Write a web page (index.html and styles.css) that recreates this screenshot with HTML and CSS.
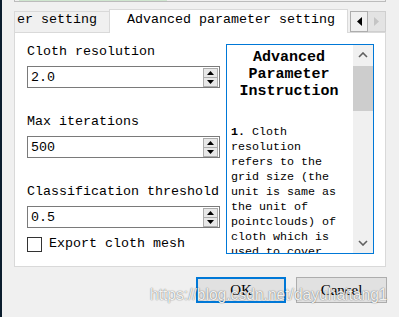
FILE: index.html
```html
<!DOCTYPE html>
<html lang="en">
<head>
    <meta charset="UTF-8">
    <title>CSF parameters</title>
    <link rel="stylesheet" href="styles.css">
</head>
<body>

    <div class="dialog">
        <div class="topstrip"><div class="topfill"></div></div>

        <div class="tabbar">
            <div class="tab">er setting</div>
            <div class="tab active">Advanced parameter setting</div>
            <div class="tabscroll">
                <div class="scrollbtn">
                    <svg width="5" height="9" viewBox="0 0 5 9"><polygon points="5,0 0,4.5 5,9" fill="#000"/></svg>
                </div>
                <div class="scrollbtn disabled">
                    <svg width="5" height="9" viewBox="0 0 5 9"><polygon points="0,0 5,4.5 0,9" fill="#c4c4c4"/></svg>
                </div>
            </div>
        </div>

        <div class="pane">
            <div class="form">
                <div class="label">Cloth resolution</div>
                <div class="spinbox">
                    <span class="value">2.0</span>
                    <div class="spin">
                        <div class="half"><svg width="7" height="4" viewBox="0 0 7 4"><polygon points="0,4 3.5,0 7,4" fill="#000"/></svg></div>
                        <div class="half"><svg width="7" height="4" viewBox="0 0 7 4"><polygon points="0,0 3.5,4 7,0" fill="#000"/></svg></div>
                    </div>
                </div>

                <div class="label">Max iterations</div>
                <div class="spinbox">
                    <span class="value">500</span>
                    <div class="spin">
                        <div class="half"><svg width="7" height="4" viewBox="0 0 7 4"><polygon points="0,4 3.5,0 7,4" fill="#000"/></svg></div>
                        <div class="half"><svg width="7" height="4" viewBox="0 0 7 4"><polygon points="0,0 3.5,4 7,0" fill="#000"/></svg></div>
                    </div>
                </div>

                <div class="label">Classification threshold</div>
                <div class="spinbox">
                    <span class="value">0.5</span>
                    <div class="spin">
                        <div class="half"><svg width="7" height="4" viewBox="0 0 7 4"><polygon points="0,4 3.5,0 7,4" fill="#000"/></svg></div>
                        <div class="half"><svg width="7" height="4" viewBox="0 0 7 4"><polygon points="0,0 3.5,4 7,0" fill="#000"/></svg></div>
                    </div>
                </div>

                <div class="checkrow">
                    <div class="checkbox"></div>
                    <span>Export cloth mesh</span>
                </div>
            </div>

            <div class="browser">
                <div class="doc">
                    <div class="doctitle">Advanced Parameter Instruction</div>
                    <p><b>1.</b> Cloth resolution refers to the grid size (the unit is same as the unit of pointclouds) of cloth which is used to cover the terrain. The bigger cloth resolution you have set, the coarser DTM you will get.</p>
                </div>
                <div class="vscroll">
                    <div class="arrow">
                        <svg width="10" height="6" viewBox="0 0 10 6"><polyline points="1,5 5,1 9,5" fill="none" stroke="#606060" stroke-width="1.6"/></svg>
                    </div>
                    <div class="track"><div class="thumb"></div></div>
                    <div class="arrow">
                        <svg width="10" height="6" viewBox="0 0 10 6"><polyline points="1,1 5,5 9,1" fill="none" stroke="#606060" stroke-width="1.6"/></svg>
                    </div>
                </div>
            </div>
        </div>

        <div class="buttons">
            <div class="btn default">OK</div>
            <div class="btn">Cancel</div>
        </div>

        <div class="watermark">https://blog.csdn.net/dayuhaitang1</div>
    </div>

</body>
</html>
```

FILE: styles.css
```css
body {
    margin: 0;
    height: 317px;
    overflow: hidden;
    background-color: #f0f0f0;
    border-left: 2px solid #0b1d2e;
    font-family: "Liberation Mono", monospace;
    font-size: 13.33px;
    color: #000;
}

.dialog {
    position: relative;
    padding: 0 12px;
}

/* bottom edge of the widget above */
.topstrip {
    height: 1px;
    margin-right: 1px;
    border: 1px solid #bcbcbc;
    border-top: none;
    margin-bottom: 7px;
    padding-left: 4px;
}

.topfill {
    width: 148px;
    height: 1px;
    background: #cfe6cf;
}

/* tabs */
.tabbar {
    display: flex;
    align-items: flex-end;
    height: 24px;
    position: relative;
    z-index: 1;
    margin-bottom: -1px;
}

.tab {
    box-sizing: border-box;
    width: 96px;
    height: 21px;
    margin-bottom: 1px;
    padding-left: 2px;
    line-height: 16px;
    border: 1px solid #d9d9d9;
    border-bottom: none;
    background: #f0f0f0;
    white-space: nowrap;
    overflow: hidden;
}

.tab.active {
    width: 239px;
    height: 24px;
    margin-bottom: 0;
    margin-left: -1px;
    padding: 2px 0 0 17px;
    background: #fff;
}

.tabscroll {
    display: flex;
    align-self: flex-start;
    margin: 2px 0 0 2px;
}

.scrollbtn {
    box-sizing: border-box;
    width: 18px;
    height: 21px;
    border: 1px solid #adadad;
    background: #f0f0f0;
    display: flex;
    align-items: center;
    justify-content: center;
}

.scrollbtn.disabled {
    border-color: #cfcfcf;
    border-left: none;
    width: 18px;
    background: #e3e3e3;
}

/* page */
.pane {
    box-sizing: border-box;
    height: 235px;
    margin-right: 1px;
    border: 1px solid #d9d9d9;
    background: #fff;
    padding: 11px 12px 12px 12px;
    display: grid;
    grid-template-columns: 193px 148px;
    column-gap: 6px;
}

.label {
    height: 16px;
    line-height: 16px;
    margin-bottom: 6px;
    white-space: nowrap;
}

.spinbox {
    box-sizing: border-box;
    height: 22px;
    margin-bottom: 26px;
    border: 1px solid #7a7a7a;
    display: flex;
    align-items: center;
    justify-content: space-between;
    padding: 0 1px 0 3px;
}

.spinbox:nth-of-type(6) {
    margin-bottom: 8px;
}

.spin {
    box-sizing: border-box;
    width: 15px;
    height: 19px;
    border: 1px solid #adadad;
    background: #e8e8e8;
    display: flex;
    flex-direction: column;
}

.spin .half {
    flex: 1;
    display: flex;
    align-items: center;
    justify-content: center;
}

.spin .half + .half {
    border-top: 1px solid #adadad;
}

.checkrow {
    display: flex;
    align-items: center;
    gap: 7px;
    line-height: 16px;
}

.checkbox {
    box-sizing: border-box;
    width: 15px;
    height: 15px;
    border: 1px solid #333;
    background: #fff;
}

/* instruction box */
.browser {
    box-sizing: border-box;
    height: 210px;
    border: 1px solid #0078d7;
    display: flex;
    overflow: hidden;
}

.doc {
    flex: 1;
    padding: 4px 6px 0 4px;
    overflow: hidden;
}

.doctitle {
    font-size: 15px;
    font-weight: bold;
    line-height: 17px;
    text-align: center;
    margin-bottom: 25px;
}

.doc p {
    margin: 0;
    font-size: 11.67px;
    line-height: 15px;
}

.vscroll {
    width: 20px;
    background: #f0f0f0;
    display: flex;
    flex-direction: column;
}

.vscroll .arrow {
    height: 20px;
    display: flex;
    align-items: center;
    justify-content: center;
}

.vscroll .track {
    flex: 1;
    padding-top: 1px;
}

.vscroll .thumb {
    height: 45px;
    background: #cdcdcd;
}

/* dialog buttons */
.buttons {
    display: flex;
    justify-content: flex-end;
    gap: 10px;
    margin-top: 10px;
}

.btn {
    box-sizing: border-box;
    width: 91px;
    height: 26px;
    border: 1px solid #adadad;
    background: #e1e1e1;
    font-family: "Liberation Serif", serif;
    font-size: 15px;
    line-height: 24px;
    text-align: center;
}

.btn.default {
    width: 90px;
    border: 2px solid #0078d7;
    line-height: 22px;
}

.watermark {
    position: absolute;
    left: 148px;
    top: 286px;
    font-family: "Liberation Sans", sans-serif;
    font-size: 15.6px;
    color: rgba(255, 255, 255, 0.92);
    text-shadow: 0 0 1px rgba(0, 0, 0, 0.55), 0 0 2px rgba(0, 0, 0, 0.2);
    white-space: nowrap;
}
```
